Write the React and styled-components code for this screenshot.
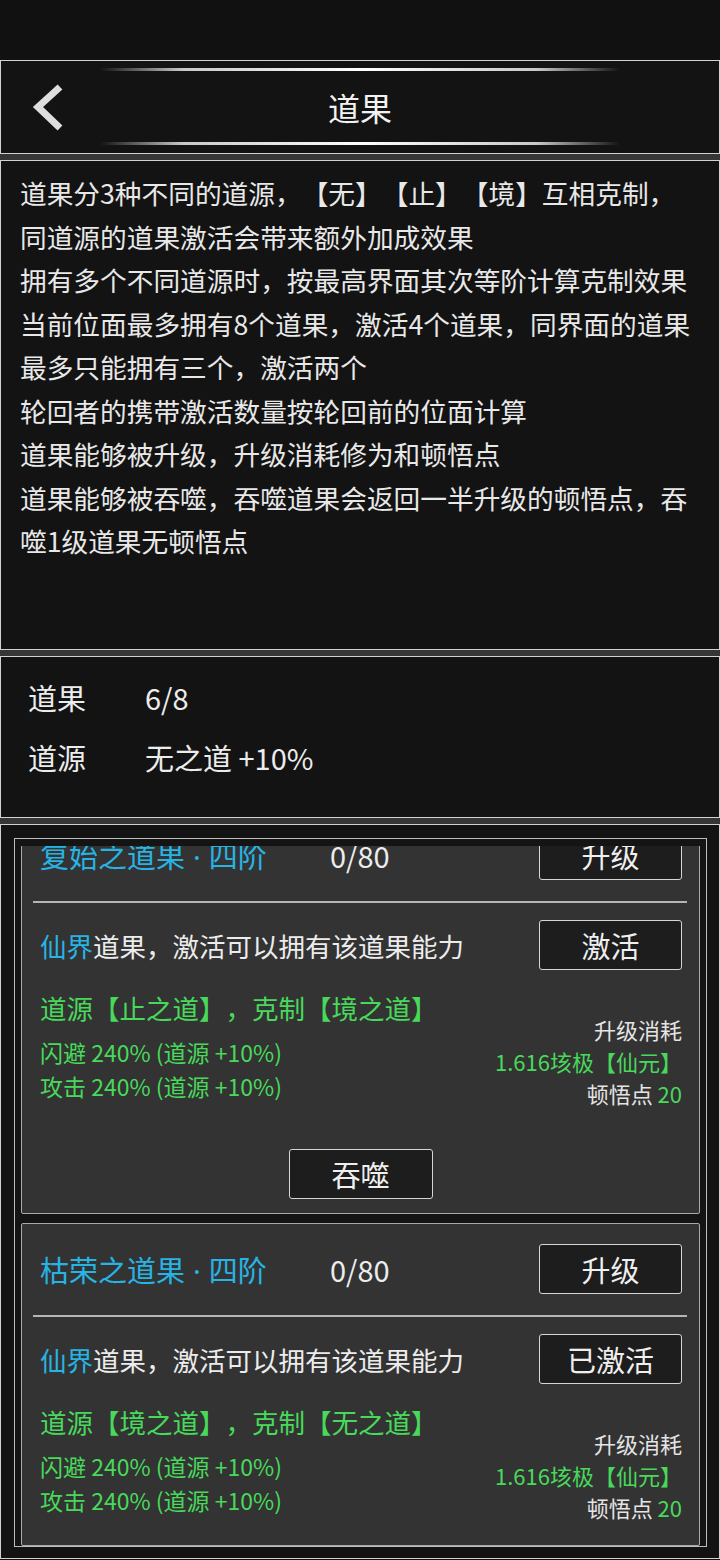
import React, { useLayoutEffect, useRef } from "react";
import styled, { createGlobalStyle } from "styled-components";

const GlobalStyle = createGlobalStyle`
  html, body {
    margin: 0;
    padding: 0;
    background: #111;
  }
  body {
    font-family: "Noto Sans CJK SC", "Noto Sans", sans-serif;
    color: #e8e8e8;
    text-autospace: no-autospace;
    text-spacing-trim: space-all;
  }
  * {
    box-sizing: border-box;
  }
`;

const CYAN = "#27b4e4";
const GREEN = "#48d95b";

const Page = styled.div`
  width: 720px;
  height: 1560px;
  overflow: hidden;
  background: #111;
`;

const StatusBar = styled.div`
  height: 60px;
  background: #111;
`;

const Panels = styled.div`
  display: flex;
  flex-direction: column;
  gap: 6px;
  background: #363636;
`;

const Panel = styled.section`
  height: ${(p) => p.$height}px;
  border: 1px solid #d2d2d2;
  background: #131313;
`;

const HeaderPanel = styled(Panel)`
  display: flex;
  flex-direction: column;
  align-items: center;
`;

const GlowLine = styled.div`
  width: 520px;
  height: 3px;
  margin: ${(p) => (p.$top ? "7px 0 0" : "0 0 8px")};
  background: linear-gradient(
    to right,
    rgba(255, 255, 255, 0),
    rgba(220, 220, 220, 0.9) 16%,
    #fff 50%,
    rgba(220, 220, 220, 0.9) 84%,
    rgba(255, 255, 255, 0)
  );
`;

const TitleRow = styled.div`
  flex: 1;
  width: 100%;
  display: grid;
  grid-template-columns: 1fr auto 1fr;
  align-items: center;
`;

const BackButton = styled.div`
  padding-left: 23px;
  display: flex;
  align-items: center;
`;

const PageTitle = styled.h1`
  margin: 0;
  font-size: 32px;
  font-weight: 400;
  color: #f2f2f2;
  line-height: 1;
`;

const DescPanel = styled(Panel)`
  padding: 10px 23px 0 19px;
`;

const DescText = styled.p`
  margin: 0;
  font-size: 26.7px;
  line-height: 43.5px;
  color: #e8e8e8;
`;

const StatsPanel = styled(Panel)`
  padding: 10px 0 0 27px;
`;

const StatRow = styled.div`
  display: flex;
  height: 60px;
  align-items: center;
  font-size: 29px;
  color: #ececec;
`;

const StatLabel = styled.span`
  width: 117px;
`;

const ListPanel = styled(Panel)`
  padding: 13px 12px 11px 13px;
`;

const ListFrame = styled.div`
  border: 1px solid #bdbdbd;
  padding: 7px 6px 0;
  background: #141414;
`;

const Viewport = styled.div`
  height: 700px;
  overflow-y: auto;
  scrollbar-width: none;
  &::-webkit-scrollbar {
    display: none;
  }
`;

const CardList = styled.div`
  display: flex;
  flex-direction: column;
  gap: 9px;
`;

const Card = styled.div`
  display: flex;
  flex-direction: column;
  border: 1px solid #a9a9a9;
  border-radius: 2px;
  background: #333;
  padding-top: 20px;
`;

const CardRow = styled.div`
  display: flex;
  align-items: center;
  height: 50px;
  padding: 0 17px 0 18px;
`;

const CardTitle = styled.span`
  width: 290px;
  font-size: 29px;
  color: ${CYAN};
  white-space: nowrap;
`;

const Dot = styled.span`
  font-family: "Noto Sans", sans-serif;
  margin: 0 8px;
`;

const Progress = styled.span`
  flex: 1;
  font-size: 29px;
  color: #ececec;
`;

const ActionButton = styled.button`
  width: 143px;
  height: 50px;
  padding: 0;
  margin-left: auto;
  border: 1px solid #d6d6d6;
  border-radius: 3px;
  background: #1d1d1d;
  color: #efefef;
  font-family: inherit;
  font-size: 29px;
  line-height: 1;
`;

const DevourButton = styled(ActionButton)`
  width: 144px;
  margin: 18px 0 14px;
  align-self: center;
`;

const Divider = styled.div`
  height: 2px;
  margin: 21px 12px 17px 11px;
  background: #b5b5b5;
`;

const Desc = styled.span`
  font-size: 26.5px;
  color: #ececec;
  white-space: nowrap;
`;

const Realm = styled.span`
  color: ${CYAN};
`;

const Details = styled.div`
  display: flex;
  justify-content: space-between;
  align-items: flex-end;
  margin: 18px 0 22px;
  padding: 0 17px 0 18px;
`;

const Effects = styled.div`
  display: flex;
  flex-direction: column;
  padding-bottom: 6px;
  color: ${GREEN};
`;

const EffectTitle = styled.div`
  font-size: 26.5px;
  line-height: 40px;
  margin-bottom: 7px;
  white-space: nowrap;
`;

const EffectLine = styled.div`
  font-size: 23px;
  line-height: 34px;
  white-space: nowrap;
`;

const Cost = styled.div`
  display: flex;
  flex-direction: column;
  align-items: flex-end;
  font-size: 22px;
  line-height: 32px;
  color: #e4e4e4;
`;

const CostLine = styled.div`
  color: ${(p) => (p.$green ? GREEN : "inherit")};
  white-space: nowrap;
`;

const Green = styled.span`
  color: ${GREEN};
`;

const paragraphs = [
  "道果分3种不同的道源，【无】【止】【境】互相克制，同道源的道果激活会带来额外加成效果",
  "拥有多个不同道源时，按最高界面其次等阶计算克制效果",
  "当前位面最多拥有8个道果，激活4个道果，同界面的道果最多只能拥有三个，激活两个",
  "轮回者的携带激活数量按轮回前的位面计算",
  "道果能够被升级，升级消耗修为和顿悟点",
  "道果能够被吞噬，吞噬道果会返回一半升级的顿悟点，吞噬1级道果无顿悟点",
];

const cards = [
  { name: "复始之道果", tier: "四阶", progress: "0/80", source: "止之道", counter: "境之道", active: false },
  { name: "枯荣之道果", tier: "四阶", progress: "0/80", source: "境之道", counter: "无之道", active: true },
];

const DaoCard = ({ item }) => (
  <Card>
    <CardRow>
      <CardTitle>
        {item.name}
        <Dot>·</Dot>
        {item.tier}
      </CardTitle>
      <Progress>{item.progress}</Progress>
      <ActionButton>升级</ActionButton>
    </CardRow>
    <Divider />
    <CardRow>
      <Desc>
        <Realm>仙界</Realm>道果，激活可以拥有该道果能力
      </Desc>
      <ActionButton>{item.active ? "已激活" : "激活"}</ActionButton>
    </CardRow>
    <Details>
      <Effects>
        <EffectTitle>
          道源【{item.source}】，克制【{item.counter}】
        </EffectTitle>
        <EffectLine>闪避 240% (道源 +10%)</EffectLine>
        <EffectLine>攻击 240% (道源 +10%)</EffectLine>
      </Effects>
      <Cost>
        <CostLine>升级消耗</CostLine>
        <CostLine $green>1.616垓极【仙元】</CostLine>
        <CostLine>
          顿悟点 <Green>20</Green>
        </CostLine>
      </Cost>
    </Details>
    {!item.active && <DevourButton>吞噬</DevourButton>}
  </Card>
);

export default function App() {
  const listRef = useRef(null);

  useLayoutEffect(() => {
    // list is shown scrolled to its end
    if (listRef.current) listRef.current.scrollTop = listRef.current.scrollHeight;
  }, []);

  return (
    <Page>
      <GlobalStyle />
      <StatusBar />
      <Panels>
        <HeaderPanel $height={94}>
          <GlowLine $top />
          <TitleRow>
            <BackButton>
              <svg width="40" height="56" viewBox="0 0 40 56">
                <polyline
                  points="36,8 14,28 36,49"
                  fill="none"
                  stroke="#dedede"
                  strokeWidth="7"
                />
              </svg>
            </BackButton>
            <PageTitle>道果</PageTitle>
            <span />
          </TitleRow>
          <GlowLine />
        </HeaderPanel>

        <DescPanel $height={490}>
          {paragraphs.map((text) => (
            <DescText key={text}>{text}</DescText>
          ))}
        </DescPanel>

        <StatsPanel $height={162}>
          <StatRow>
            <StatLabel>道果</StatLabel>
            <span>6/8</span>
          </StatRow>
          <StatRow>
            <StatLabel>道源</StatLabel>
            <span>无之道 +10%</span>
          </StatRow>
        </StatsPanel>

        <ListPanel $height={735}>
          <ListFrame>
            <Viewport ref={listRef}>
              <CardList>
                {cards.map((c) => (
                  <DaoCard key={c.name} item={c} />
                ))}
              </CardList>
            </Viewport>
          </ListFrame>
        </ListPanel>
      </Panels>
    </Page>
  );
}
